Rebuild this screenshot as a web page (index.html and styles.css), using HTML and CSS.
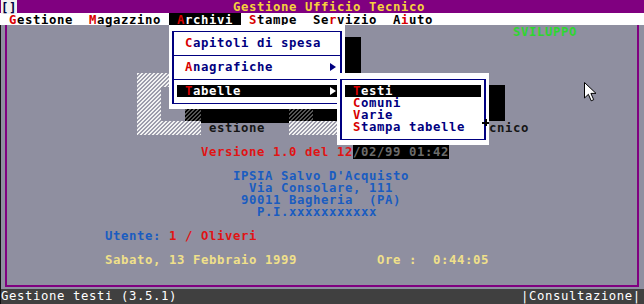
FILE: index.html
```html
<!DOCTYPE html>
<html lang="it">
<head>
    <meta charset="UTF-8">
    <title>Gestione Ufficio Tecnico</title>
    <link rel="stylesheet" href="styles.css">
</head>
<body>
<div class="screen">
    <div class="row title-bar"><span class="close-box">[]</span>                           Gestione Ufficio Tecnico</div>
    <div class="row menu-bar"> <span class="hk">G</span>estione  <span class="hk">M</span>agazzino <span class="menu-active"> <span class="hk">A</span>rchivi </span> <span class="hk">S</span>tampe  Se<span class="hk">r</span>vizio  A<span class="hk">i</span>uto</div>

    <div class="desk">
        <div class="row">                                                                <span class="green">SVILUPPO</span></div>
        <div class="row"></div>
        <div class="row"></div>
        <div class="row"></div>
        <div class="row">                 <span class="shade">    </span></div>
        <div class="row">                 <span class="shade">   </span></div>
        <div class="row">                 <span class="shade">   </span></div>
        <div class="row">                 <span class="shade">   </span>   <span class="shade-dark">  </span><span class="black">           </span><span class="shade-dark">   </span><span class="black">   </span></div>
        <div class="row">                 <span class="shade">        </span><span class="dim"> estione</span>   <span class="shade">      </span>                   <span class="dim">cnico</span></div>
        <div class="row"></div>
        <div class="row">                         <span class="red">Versione 1.0 del 12</span><span class="shadow-text">/02/99 01:42</span></div>
        <div class="row"></div>
        <div class="block block-4"><span class="blue">                             IPSIA Salvo D'Acquisto
                               Via Consolare, 111
                              90011 Bagheria  (PA)
                                P.I.xxxxxxxxxxx</span></div>
        <div class="row"></div>
        <div class="row">             <span class="blue">Utente: </span><span class="red">1 / Oliveri</span></div>
        <div class="row"></div>
        <div class="row">             <span class="cream">Sabato, 13 Febbraio 1999</span>          <span class="cream">Ore :  0:44:05</span></div>
        <div class="row"></div>
        <div class="row"></div>
    </div>

    <div class="row status-bar">Gestione testi (3.5.1)                                           |Consultazione|</div>

    <!-- menu Archivi -->
    <div class="dropdown archivi">
        <div class="dropdown-box">
            <div class="item"><span><span class="hk">C</span>apitoli di spesa</span></div>
            <div class="sep"></div>
            <div class="item"><span><span class="hk">A</span>nagrafiche</span><span class="arrow"></span></div>
            <div class="sep"></div>
            <div class="item on"><span><span class="hk">T</span>abelle</span><span class="arrow"></span></div>
        </div>
    </div>

    <!-- sottomenu Tabelle -->
    <div class="dropdown tabelle">
        <div class="dropdown-box">
            <div class="item on"><span><span class="hk">T</span>esti</span></div>
            <div class="item"><span><span class="hk">C</span>omuni</span></div>
            <div class="item"><span><span class="hk">V</span>arie</span></div>
            <div class="item"><span><span class="hk">S</span>tampa tabelle</span></div>
        </div>
    </div>
    <div class="tick"></div>

    <svg class="pointer" width="13" height="20" viewBox="0 0 13 20">
        <path d="M0.5 0.5 L0.5 16 L4.4 12.3 L7.2 18.8 L9.7 17.7 L6.9 11.4 L12 11.4 Z" fill="#fff" stroke="#000" stroke-width="1"/>
    </svg>
</div>
</body>
</html>
```

FILE: styles.css
```css
* {
    margin: 0;
    padding: 0;
    box-sizing: border-box;
}

body {
    width: 644px;
    height: 304px;
    overflow: hidden;
    background-color: #2b2b2b;
    font-family: "DejaVu Sans Mono", monospace;
    font-weight: bold;
    font-size: 12.3px;
    letter-spacing: 0.595px;
}

.screen {
    position: relative;
    width: 644px;
    height: 304px;
}

.row {
    height: 12px;
    line-height: 14px;
    white-space: pre;
    padding-left: 1px;
}

/* piu' righe di testo in un blocco unico */
.block {
    padding: 1px 0 0 1px;
    line-height: 12px;
    white-space: pre;
}

.block-4 {
    height: 48px;
}

.title-bar {
    height: 13px;
    padding-top: 1px;
    line-height: 13px;
    background-color: #800080;
    color: #f6d23c;
}

.close-box {
    background-color: #f0f0f0;
    color: #000040;
}

.menu-bar {
    background-color: #fff;
    color: #000;
}

.hk {
    color: #d80000;
}

.menu-active {
    background-color: #000;
    color: #fff;
}

.desk {
    height: 264px;
    background:
        linear-gradient(#800080, #800080) 5px 0 / 2px 262px no-repeat,
        linear-gradient(#800080, #800080) 637px 0 / 2px 262px no-repeat,
        linear-gradient(#800080, #800080) 5px 260px / 634px 2px no-repeat,
        linear-gradient(#111, #111) 0 0 / 1px 100% no-repeat,
        #8f8fa0;
}

.status-bar {
    height: 15px;
    background-color: #404040;
    color: #fff;
    font-weight: normal;
    border-left: 1px solid #111;
    padding-left: 0;
}

/* colori testo */
.green { color: #2ed62e; }
.red { color: #e01414; }
.blue { color: #1a5cc0; }
.cream { color: #f0e08a; }
.dim { color: #151515; }

/* retini del logo */
.shade {
    background: repeating-linear-gradient(-45deg, #f2f2f2 0 1.4px, #9c9cab 1.4px 2.8px);
}

.shade-dark {
    background: repeating-linear-gradient(-45deg, #555 0 1.4px, #000 1.4px 2.8px);
}

.black {
    background-color: #000;
}

.shadow-text {
    background-color: #000;
    color: #6c6c6c;
}

/* menu a tendina */
.dropdown {
    position: absolute;
    padding: 6px 3px 5px;
    background-color: #fff;
    color: #000080;
}

.dropdown::after {
    content: "";
    position: absolute;
    left: 100%;
    top: 12px;
    width: 16px;
    background-color: #000;
}

.archivi {
    left: 169px;
    top: 25px;
    width: 176px;
}

.archivi::after {
    height: 72px;
}

.tabelle {
    left: 337px;
    top: 73px;
    width: 152px;
}

.tabelle::after {
    height: 36px;
}

.dropdown-box {
    border: 2px solid #000080;
    border-top-width: 1px;
    border-bottom-width: 1px;
    padding: 5px 0 6px;
}

.item {
    display: flex;
    justify-content: space-between;
    align-items: center;
    height: 12px;
    line-height: 14px;
    margin: 0 3px;
    padding-left: 8px;
    white-space: pre;
}

.item.on {
    background-color: #000;
    color: #fff;
}

.sep {
    height: 1px;
    margin: 6px 0 5px;
    background-color: #000080;
}

.arrow {
    width: 0;
    height: 0;
    margin-right: 1px;
    border-left: 6px solid #000080;
    border-top: 4px solid transparent;
    border-bottom: 4px solid transparent;
}

.item.on .arrow {
    border-left-color: #fff;
}

.tick {
    position: absolute;
    left: 482px;
    top: 119px;
    width: 7px;
    height: 7px;
    background:
        linear-gradient(#000, #000) center / 7px 2px no-repeat,
        linear-gradient(#000, #000) center / 2px 7px no-repeat;
}

.pointer {
    position: absolute;
    left: 584px;
    top: 82px;
}
```
